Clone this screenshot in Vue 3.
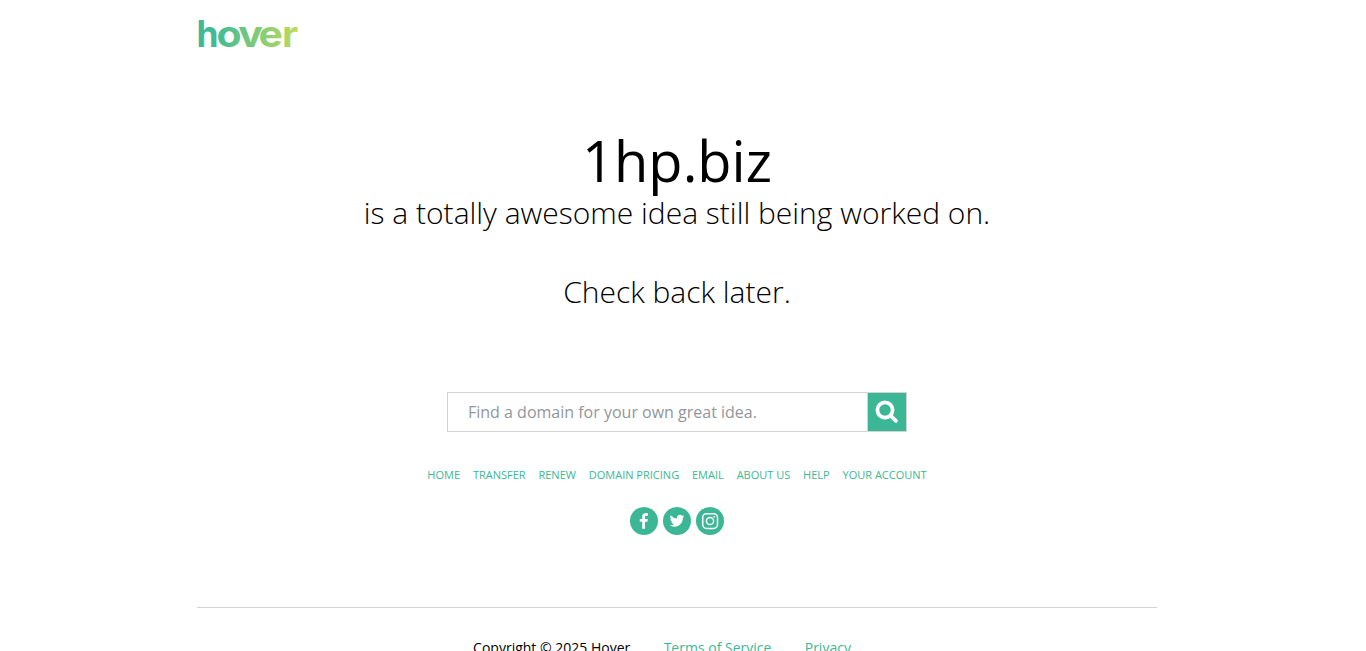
<template>
  <div class="page">
    <header class="header">
      <a href="#" class="logo" aria-label="hover">
        <svg width="102" height="40" viewBox="0 0 102 40">
          <defs>
            <linearGradient id="logo-fill" gradientUnits="userSpaceOnUse" x1="0" y1="0" x2="102" y2="0">
              <stop offset="0" stop-color="#3cb996" />
              <stop offset="0.18" stop-color="#3fbb95" />
              <stop offset="1" stop-color="#c1db5b" />
            </linearGradient>
          </defs>
          <text
            v-for="letter in logo"
            :key="letter.char"
            :x="letter.x"
            :textLength="letter.width"
            y="31.6"
            lengthAdjust="spacingAndGlyphs"
            fill="url(#logo-fill)"
          >{{ letter.char }}</text>
        </svg>
      </a>
    </header>

    <main class="content">
      <h1>{{ domain }}</h1>
      <h2>is a totally awesome idea still being worked on.</h2>
      <p class="later">Check back later.</p>

      <form class="search" @submit.prevent>
        <input v-model="query" type="text" placeholder="Find a domain for your own great idea.">
        <button type="submit" aria-label="Search">
          <svg width="38" height="38" viewBox="0 0 38 38" fill="none" stroke="#fff">
            <circle cx="17" cy="17" r="7.6" stroke-width="3.7" />
            <path d="M22.6 22.6l5.3 5.2" stroke-width="3.8" stroke-linecap="round" />
          </svg>
        </button>
      </form>

      <nav class="links">
        <a v-for="link in links" :key="link" href="#">{{ link }}</a>
      </nav>

      <div class="social">
        <a href="#" aria-label="Facebook">
          <svg viewBox="0 0 28 28">
            <path fill="#fff" d="M12.2 21.8v-7.1H9.8v-2.8h2.4V9.8c0-2.4 1.4-3.7 3.6-3.7.9 0 1.8.1 2.1.2v2.5h-1.5c-1.1 0-1.4.6-1.4 1.4v1.7h2.8l-.4 2.8H15v7.1z" />
          </svg>
        </a>
        <a href="#" aria-label="Twitter">
          <svg viewBox="0 0 28 28">
            <path fill="#fff" transform="translate(6.7 6.4) scale(.61)" d="M23.95 4.57a10 10 0 0 1-2.82.78 4.96 4.96 0 0 0 2.16-2.73 9.9 9.9 0 0 1-3.12 1.19 4.92 4.92 0 0 0-8.38 4.48A13.93 13.93 0 0 1 1.64 3.16a4.92 4.92 0 0 0 1.52 6.57 4.9 4.9 0 0 1-2.23-.61v.06a4.92 4.92 0 0 0 3.95 4.83 5 5 0 0 1-2.21.08 4.94 4.94 0 0 0 4.6 3.42A9.87 9.87 0 0 1 0 19.54a13.99 13.99 0 0 0 7.55 2.21c9.05 0 14-7.5 14-13.98 0-.21 0-.42-.02-.63a9.94 9.94 0 0 0 2.42-2.57z" />
          </svg>
        </a>
        <a href="#" aria-label="Instagram">
          <svg viewBox="0 0 28 28" fill="none" stroke="#fff" stroke-width="1.5">
            <rect x="6.7" y="6.7" width="14.8" height="14.8" rx="4" />
            <circle cx="14" cy="14" r="3.6" />
            <circle cx="18.2" cy="9.8" r=".9" fill="#fff" stroke="none" />
          </svg>
        </a>
      </div>
    </main>

    <footer class="footer">
      <span>Copyright © 2025 Hover</span>
      <a href="#">Terms of Service</a>
      <a href="#">Privacy</a>
    </footer>
  </div>
</template>

<script setup>
import { ref } from 'vue';

const domain = '1hp.biz';
const query = ref('');
const links = ['Home', 'Transfer', 'Renew', 'Domain Pricing', 'Email', 'About Us', 'Help', 'Your Account'];

// the wordmark letters are wide and tightly set
const logo = [
  { char: 'h', x: -0.6, width: 22 },
  { char: 'o', x: 19.6, width: 25.2 },
  { char: 'v', x: 41.2, width: 24.6 },
  { char: 'e', x: 61.6, width: 24.4 },
  { char: 'r', x: 85, width: 16.2 }
];
</script>

<style>
html,
body {
  margin: 0;
  height: 100%;
  overflow: hidden;
  background: #fff;
}
</style>

<style scoped>
.page {
  width: 960px;
  height: 651px;
  margin-left: 197px;
  overflow: hidden;
  font-family: "Open Sans", sans-serif;
  color: #000;
}

a {
  color: #3cb796;
  text-decoration: none;
}

.header {
  height: 121px;
  padding-top: 15px;
  box-sizing: border-box;
}

.logo svg {
  display: block;
  overflow: visible;
}

.logo text {
  font-family: Inter, sans-serif;
  font-size: 36.5px;
  font-weight: 700;
}

.content {
  display: flex;
  flex-direction: column;
  align-items: center;
  height: 486px;
  text-align: center;
}

h1 {
  margin: 0;
  font-size: 56px;
  font-weight: 400;
  line-height: 72px;
  padding-top: 3px;
}

h2,
.later {
  margin: 0;
  font-size: 30px;
  font-weight: 300;
  line-height: 40px;
  white-space: nowrap;
}

h2 {
  margin-top: -3px;
}

.later {
  margin-top: 39px;
}

.search {
  display: flex;
  box-sizing: border-box;
  width: 460px;
  height: 40px;
  margin-top: 80px;
  border: 1px solid #d3d3d3;
}

.search input {
  flex: 1;
  min-width: 0;
  padding: 0 20px;
  border: 0;
  border-right: 1px solid #d3d3d3;
  outline: none;
  font-family: inherit;
  font-size: 16px;
}

.search input::placeholder {
  color: #92979b;
}

.search button {
  width: 38px;
  padding: 0;
  border: 0;
  background: #3cb796;
}

.search button svg {
  display: block;
}

.links {
  display: flex;
  gap: 12.86px;
  margin-top: 35px;
  font-size: 11px;
  line-height: 16px;
  text-transform: uppercase;
  white-space: nowrap;
}

.social {
  display: flex;
  gap: 5px;
  margin-top: 24px;
}

.social a {
  width: 28px;
  height: 28px;
  border-radius: 50%;
  background: #3cb796;
}

.social svg {
  display: block;
}

.footer {
  display: flex;
  justify-content: center;
  gap: 33.4px;
  padding: 30px 30px 0 0;
  border-top: 1px solid #d3d3d3;
  font-size: 14px;
  line-height: 20px;
}
</style>
